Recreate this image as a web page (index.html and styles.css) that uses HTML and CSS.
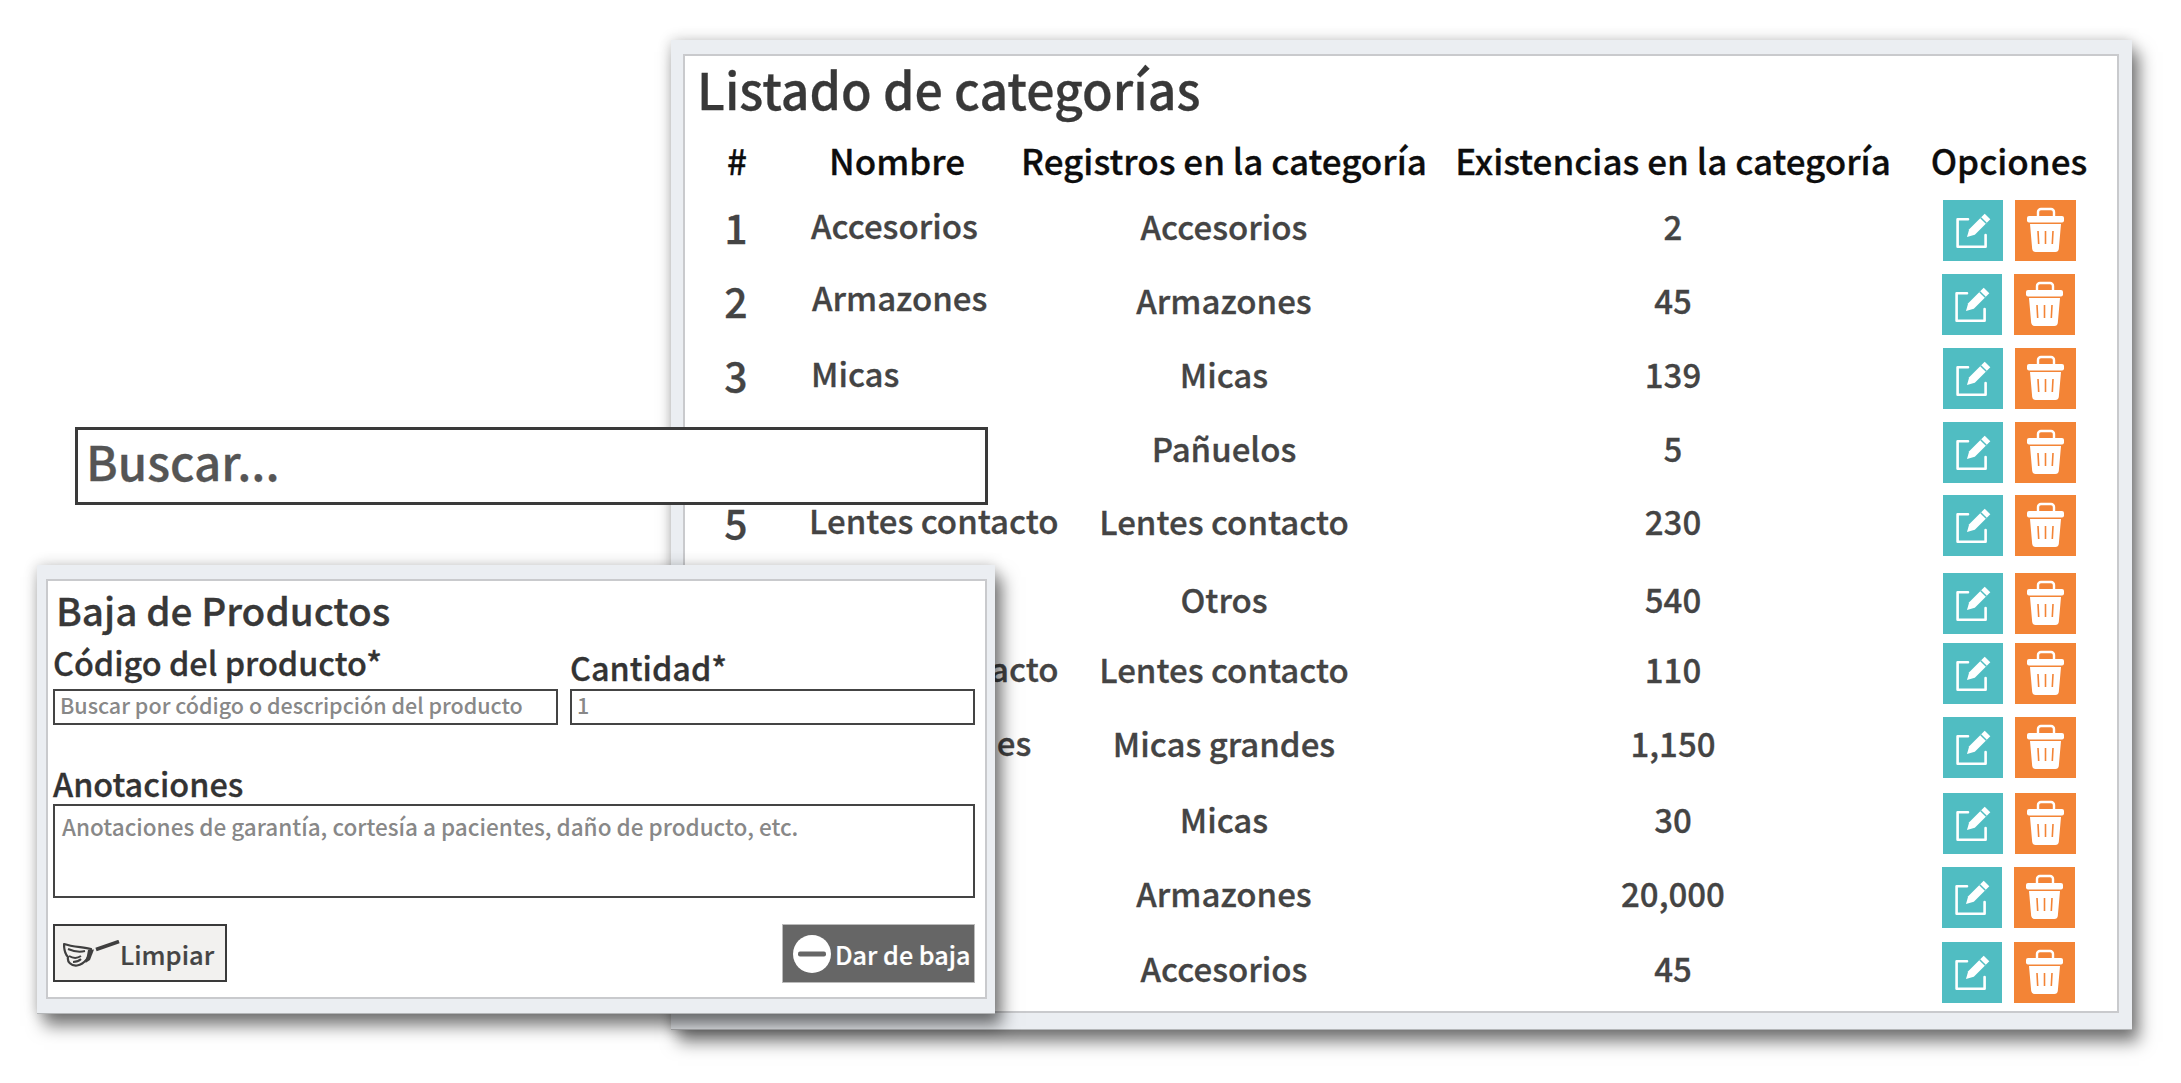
FILE: index.html
```html
<!DOCTYPE html>
<html lang="es">
<head>
<meta charset="utf-8">
<title>Categorías</title>
<link rel="stylesheet" href="styles.css">
</head>
<body>
<svg class="defs" width="0" height="0">
  <symbol id="edit" viewBox="0 0 60 60">
    <path d="M25 19.200H14.600V46.800H42.600V35" fill="none" stroke="#fff" stroke-width="2.600" stroke-linejoin="round" stroke-linecap="round"/>
    <path d="M24 37L26.200 29.200L41.700 13.700L47.300 19.300L31.800 34.800Z" fill="#fff"/>
    <path d="M37.700 17.700L43.300 23.300" stroke="#50bdc2" stroke-width="1.500"/>
  </symbol>
  <symbol id="trash" viewBox="0 0 60 60">
    <path d="M23 16v-4a3 3 0 0 1 3-3h10a3 3 0 0 1 3 3v4" fill="none" stroke="#fff" stroke-width="2.400"/>
    <rect x="12" y="16" width="37" height="6.500" rx="2" fill="#fff"/>
    <path d="M15 24h31l-2.200 25a3.500 3.500 0 0 1-3.500 3H20.700a3.500 3.500 0 0 1-3.500-3z" fill="#fff"/>
    <path d="M23 31l.7 13M30.500 31v13M38 31l-.7 13" stroke="#f38436" stroke-width="1.600"/>
  </symbol>
</svg>

<section class="window list-window">
  <div class="inner">
    <h1 class="list-title">Listado de categorías</h1>
    <div class="row head"><span>#</span><span>Nombre</span><span>Registros en la categoría</span><span>Existencias en la categoría</span><span>Opciones</span></div>
    <div class="row r1"><b>1</b><span class="name">Accesorios</span><span>Accesorios</span><span>2</span><div class="ops"><a class="btn teal"><svg><use href="#edit"/></svg></a><a class="btn orange"><svg><use href="#trash"/></svg></a></div></div>
    <div class="row r2"><b>2</b><span class="name">Armazones</span><span>Armazones</span><span>45</span><div class="ops"><a class="btn teal"><svg><use href="#edit"/></svg></a><a class="btn orange"><svg><use href="#trash"/></svg></a></div></div>
    <div class="row r3"><b>3</b><span class="name">Micas</span><span>Micas</span><span>139</span><div class="ops"><a class="btn teal"><svg><use href="#edit"/></svg></a><a class="btn orange"><svg><use href="#trash"/></svg></a></div></div>
    <div class="row r4"><b>4</b><span class="name">Pañuelos</span><span>Pañuelos</span><span>5</span><div class="ops"><a class="btn teal"><svg><use href="#edit"/></svg></a><a class="btn orange"><svg><use href="#trash"/></svg></a></div></div>
    <div class="row r5"><b>5</b><span class="name">Lentes contacto</span><span>Lentes contacto</span><span>230</span><div class="ops"><a class="btn teal"><svg><use href="#edit"/></svg></a><a class="btn orange"><svg><use href="#trash"/></svg></a></div></div>
    <div class="row r6"><b>6</b><span class="name">Otros</span><span>Otros</span><span>540</span><div class="ops"><a class="btn teal"><svg><use href="#edit"/></svg></a><a class="btn orange"><svg><use href="#trash"/></svg></a></div></div>
    <div class="row r7"><b>7</b><span class="name">Lentes contacto</span><span>Lentes contacto</span><span>110</span><div class="ops"><a class="btn teal"><svg><use href="#edit"/></svg></a><a class="btn orange"><svg><use href="#trash"/></svg></a></div></div>
    <div class="row r8"><b>8</b><span class="name">Micas grandes</span><span>Micas grandes</span><span>1,150</span><div class="ops"><a class="btn teal"><svg><use href="#edit"/></svg></a><a class="btn orange"><svg><use href="#trash"/></svg></a></div></div>
    <div class="row r9"><b>9</b><span class="name">Micas</span><span>Micas</span><span>30</span><div class="ops"><a class="btn teal"><svg><use href="#edit"/></svg></a><a class="btn orange"><svg><use href="#trash"/></svg></a></div></div>
    <div class="row r10"><b>10</b><span class="name">Armazones</span><span>Armazones</span><span>20,000</span><div class="ops"><a class="btn teal"><svg><use href="#edit"/></svg></a><a class="btn orange"><svg><use href="#trash"/></svg></a></div></div>
    <div class="row r11"><b>11</b><span class="name">Accesorios</span><span>Accesorios</span><span>45</span><div class="ops"><a class="btn teal"><svg><use href="#edit"/></svg></a><a class="btn orange"><svg><use href="#trash"/></svg></a></div></div>
  </div>
</section>

<div class="search">Buscar...</div>

<section class="window form-window">
  <div class="inner form-inner">
    <h2 class="form-title">Baja de Productos</h2>
    <div class="fields">
      <div class="field code"><label>Código del producto*</label><div class="input">Buscar por código o descripción del producto</div></div>
      <div class="field qty"><label>Cantidad*</label><div class="input">1</div></div>
    </div>
    <label class="notes-label">Anotaciones</label>
    <div class="textarea">Anotaciones de garantía, cortesía a pacientes, daño de producto, etc.</div>
    <div class="actions">
      <button class="clear">
        <svg class="broom" viewBox="0 0 57 27" width="57" height="27">
          <path d="M33 9.500L56 1.500" stroke="#3f3f3f" stroke-width="3.600" fill="none"/>
          <path d="M1 4C10 7 20 7 28 9C27 16 22 24 14 25.500C8 26 4 22 5 17C2 14 1 9 1 4Z" fill="none" stroke="#3f3f3f" stroke-width="2.200" stroke-linejoin="round"/>
          <path d="M5 9C12 12 18 12 22 11M6 16C11 19 15 18 18 16M10 22C13 22 16 21 18 19" fill="none" stroke="#3f3f3f" stroke-width="2"/>
          <path d="M25 10L31 9.500L27 20L22.500 23Z" fill="#3f3f3f"/>
        </svg>
        <span>Limpiar</span>
      </button>
      <button class="remove"><svg class="minus" viewBox="0 0 38 38" width="38" height="38"><circle cx="19" cy="19" r="19" fill="#fff"/><rect x="5" y="16.500" width="28" height="5" rx="2" fill="#666"/></svg><span>Dar de baja</span></button>
    </div>
  </div>
</section>
</body>
</html>
```
FILE: styles.css
```css
* { box-sizing: border-box; }
html, body { margin: 0; height: 100%; background: #fff; }
body {
  position: relative;
  width: 2181px;
  height: 1083px;
  overflow: hidden;
  font-family: "Noto Sans CJK SC", "Noto Sans", sans-serif;
  color: #444;
  -webkit-text-stroke: .3px currentColor;
}
.defs { position: absolute; }
.window {
  position: absolute;
  background: #ebeef2;
  border-bottom: 1px solid #b4b6b8;
  box-shadow: 7px 12px 16px rgba(0, 0, 0, .5), 0 0 13px rgba(0, 0, 0, .2);
}
.inner { height: 100%; background: #fff; border: 2px solid #c9cacd; }

.list-window { left: 671px; top: 40px; width: 1461px; height: 990px; padding: 14px 13px 16px 12px; }
.list-title { margin: 0; padding-left: 12px; height: 65px; font-size: 50px; line-height: 65px; font-weight: 500; color: #383838; }
.row {
  display: grid;
  grid-template-columns: 94px 226px 428px 470px 202px;
  align-items: center;
  height: 61px;
  margin-left: 5px;
  text-align: center;
  font-size: 33px;
  line-height: 40px;
  font-weight: 500;
  white-space: nowrap;
}
.row > span, .row > b { margin-bottom: 10px; }
.head { height: 50px; margin-top: 14px; color: #0d0d0d; font-size: 35px; }
.head > span { margin-bottom: 0; }
.row > b { font-size: 41px; font-weight: 500; margin-right: 2px; }
.row > .name { text-align: left; padding-left: 27px; margin-bottom: 12px; }
.r2 > .name { padding-left: 28px; margin-bottom: 15px; }
.r5 > .name, .r7 > .name, .r8 > .name { padding-left: 25px; }
.ops { display: flex; gap: 12px; padding-left: 35px; }
.r2 .ops, .r10 .ops, .r11 .ops { padding-left: 34px; }
.btn { display: block; width: 60px; height: 61px; }
.btn svg { display: block; width: 60px; height: 60px; }
.teal { background: #50bdc2; }
.orange { width: 61px; background: #f38436; }
.r1 { margin-top: 15px; }
.r2 { margin-top: 13px; }
.r3 { margin-top: 13px; }
.r4 { margin-top: 13px; }
.r5 { margin-top: 12px; }
.r6 { margin-top: 17px; }
.r7 { margin-top: 9px; }
.r8 { margin-top: 13px; }
.r9 { margin-top: 15px; }
.r10 { margin-top: 13px; }
.r11 { margin-top: 14px; }

.search {
  position: absolute;
  left: 75px;
  top: 427px;
  width: 913px;
  height: 78px;
  padding-left: 8px;
  background: #fff;
  border: 3px solid #3a3a3a;
  font-size: 47.500px;
  line-height: 62px;
  font-weight: 500;
  color: #555;
}

.form-window { left: 37px; top: 565px; width: 958px; height: 449px; padding: 14px 8px 14px 9px; }
.form-inner { padding: 0 10px 0 5px; }
.form-title { margin: 0 0 0 3px; height: 56px; font-size: 38.700px; line-height: 56px; font-weight: 500; color: #383838; }
.fields { display: flex; gap: 12px; align-items: flex-end; margin-top: 3px; }
.field label { display: block; font-size: 32.400px; line-height: 44px; font-weight: 500; color: #333; }
.code label { margin-bottom: 5px; }
.code { width: 505px; }
.qty { width: 405px; }
.input {
  height: 36px;
  padding-left: 5px;
  border: 2px solid #444;
  font-size: 21.500px;
  line-height: 28px;
  font-weight: 500;
  color: #888;
  white-space: nowrap;
  -webkit-text-stroke: 0;
}
.notes-label { display: block; margin-top: 37px; font-size: 32.400px; line-height: 42px; font-weight: 500; color: #333; }
.textarea {
  height: 94px;
  padding: 3px 7px;
  border: 2px solid #444;
  font-size: 22.500px;
  line-height: 34px;
  font-weight: 500;
  color: #888;
  -webkit-text-stroke: 0;
}
.actions { display: flex; justify-content: space-between; margin-top: 26px; }
button { font-family: inherit; font-weight: 500; display: flex; align-items: center; padding: 0; cursor: pointer; white-space: nowrap; -webkit-text-stroke: .2px currentColor; }
.clear {
  width: 174px;
  height: 58px;
  padding-left: 8px;
  background: #f2f1ef;
  border: 2px solid #3a3a3a;
  font-size: 25.500px;
  color: #444;
}
.remove {
  width: 193px;
  height: 59px;
  padding-left: 10px;
  gap: 4px;
  background: #666;
  border: 1px solid #bbb;
  font-size: 25.200px;
  color: #fff;
}
```
